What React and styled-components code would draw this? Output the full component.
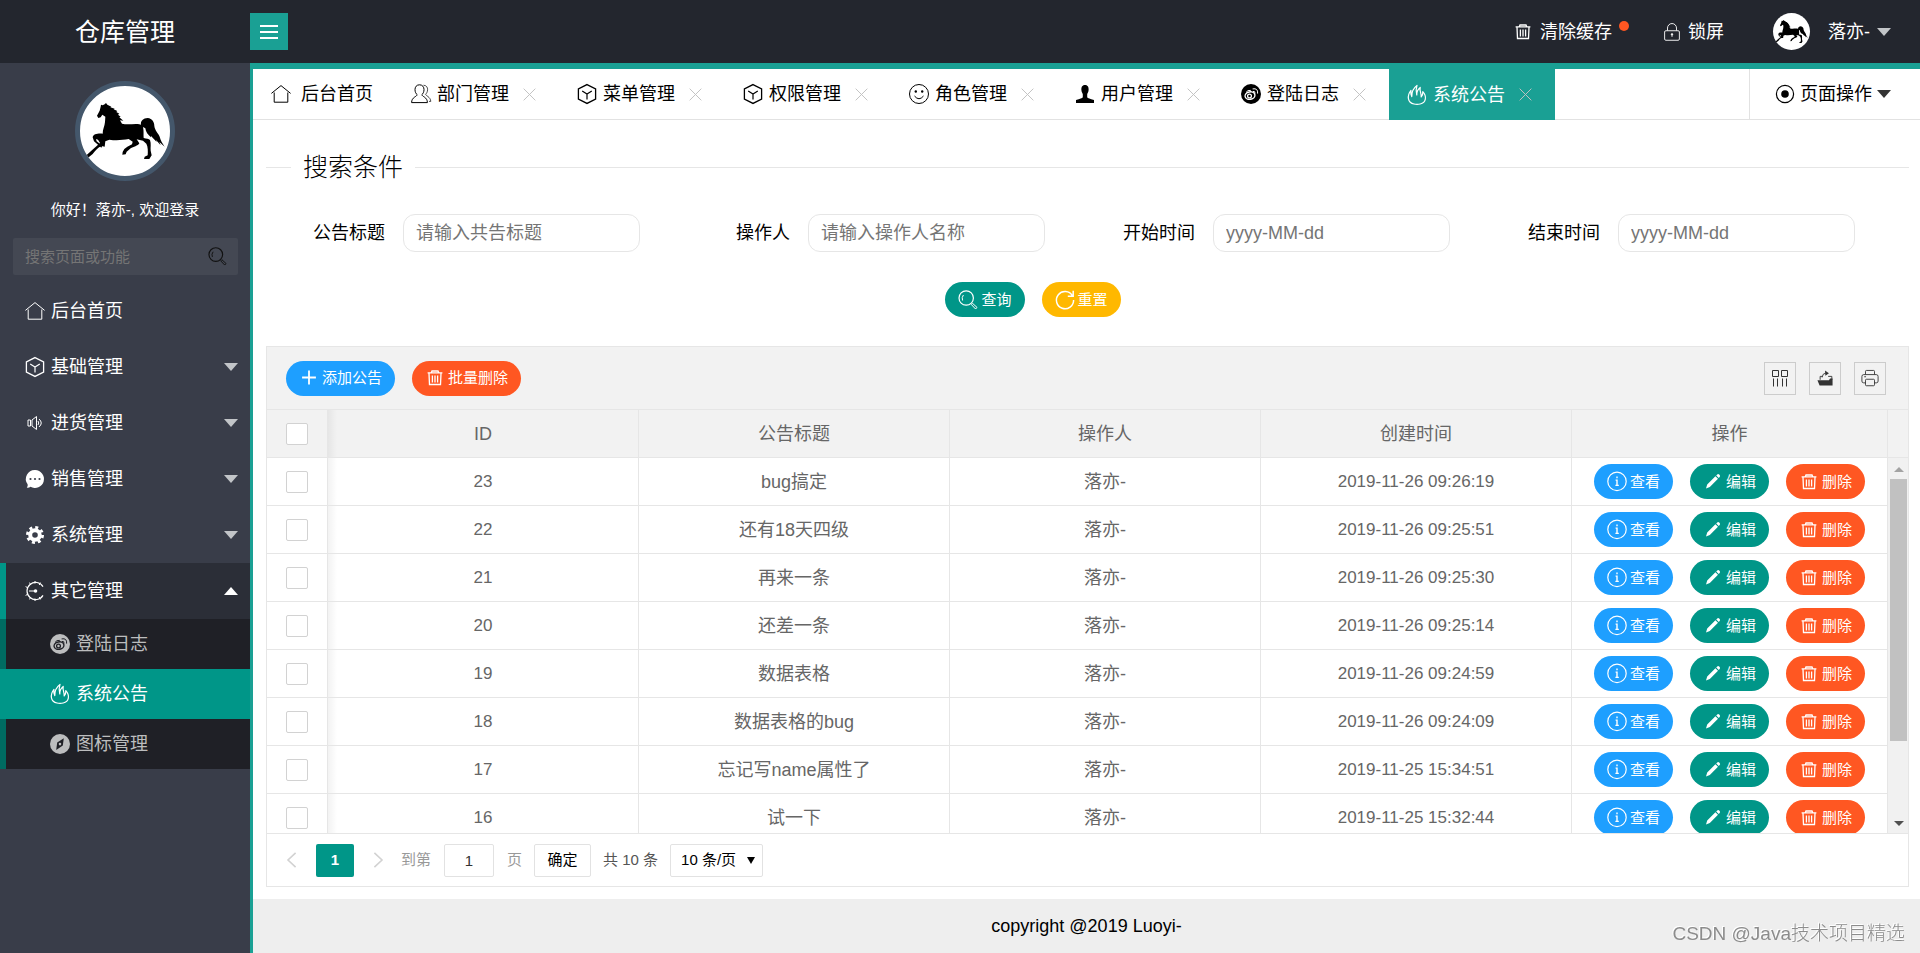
import React, { useState } from 'react';
import styled, { createGlobalStyle, css } from 'styled-components';

const GlobalStyle = createGlobalStyle`
  * {
    box-sizing: border-box;
  }

  body {
    margin: 0;
    background: #fff;
    color: #000;
    font-family: "Liberation Sans", "Noto Sans CJK SC", sans-serif;
    font-size: 18px;
    font-weight: 400;
    line-height: 24px;
  }

  button, input, select {
    font: inherit;
    color: inherit;
  }

  button {
    padding: 0;
    border: 0;
    background: none;
    cursor: pointer;
  }

  a {
    color: inherit;
    text-decoration: none;
  }

  ul {
    margin: 0;
    padding: 0;
    list-style: none;
  }
`;

/* ---------- icons ---------- */

const Svg = styled.svg`
  width: ${({ $size }) => $size || 20}px;
  height: ${({ $size }) => $size || 20}px;
  flex-shrink: 0;
  display: block;
  overflow: visible;
  fill: none;
  stroke: currentColor;
  stroke-width: 1;
`;

const icons = {
  home: (
    <path d="M0.4 9.4 10 1.6 19.6 9.4M3.2 8.5V18.2H16.8V8.5" />
  ),
  cube: (
    <>
      <path strokeWidth="1.3" d="M10 0.6 18.6 5V15L10 19.4 1.4 15V5Z" />
      <path strokeWidth="1.2" d="M5.2 7 10 10 14.8 7M10 10V15.4" />
    </>
  ),
  speaker: (
    <>
      <path d="M3 7H5.5V13H3ZM7 7 11.5 3.5V16.5L7 13Z" />
      <path d="M13 8Q14.5 10 13 12M14 6Q18.5 10 14 14" />
    </>
  ),
  chat: (
    <>
      <path fill="currentColor" stroke="none" d="M10.2 1A9 9 0 1 1 5.5 17.8Q3.8 19 1.8 18.6 3.2 17 2.6 15.3A9 9 0 0 1 10.2 1Z" />
      <g fill="#393d49" stroke="none">
        <circle cx="5.5" cy="10" r="1.1" />
        <circle cx="10" cy="10" r="1.1" />
        <circle cx="14.5" cy="10" r="1.1" />
      </g>
    </>
  ),
  gear: (
    <>
      <circle cx="10" cy="10" r="7.6" stroke="currentColor" strokeWidth="2.8" strokeDasharray="3 2.97" />
      <circle cx="10" cy="10" r="4.8" strokeWidth="4" />
    </>
  ),
  dial: (
    <>
      <path d="M18 5.6A8.6 8.6 0 1 0 18 14.4" strokeWidth="1.2" />
      <path d="M10 0V2.5M10 17.5V20M4.5 1.6 5.8 4M15.5 1.6 14.2 4M0.6 5.6 3.2 7M0.6 14.4 3.2 13M4.5 18.4 5.8 16M15.5 18.4 14.2 16M4 10H12" />
      <circle cx="10.5" cy="10" r="1.8" fill="currentColor" stroke="none" />
    </>
  ),
  weibo: (
    <>
      <circle cx="10" cy="10" r="10" fill="currentColor" stroke="none" />
      <g style={{ color: 'var(--cut)' }}>
        <ellipse cx="9" cy="11.6" rx="5" ry="3.7" transform="rotate(-12 9 11.6)" stroke="currentColor" strokeWidth="1.4" />
        <circle cx="8.5" cy="12" r="1.9" stroke="currentColor" strokeWidth="1.3" />
        <path stroke="currentColor" d="M5 8.5Q6.5 5.8 9.8 6.4M12 7.4Q14.4 7 14 9.6M11.6 4.9Q17.2 3.8 16.6 9.6" />
      </g>
    </>
  ),
  flame: (
    <path
      strokeWidth="1.2"
      strokeLinejoin="round"
      d="M7 19C0.6 17.6 -0.4 11 4 5.4 3.6 8 3.8 10 4.8 11.6 4.6 7.4 6.2 3.2 10 0.4 8.8 3.8 9 7 9.8 10 9.6 7 10.6 4.4 13.2 2.4 12.4 6 14.4 8 14.2 12 15.4 10.4 16 8.6 15.8 6.6 20.2 11.4 19 18 13.2 19 11 19.5 9 19.5 7 19Z"
    />
  ),
  compass: (
    <>
      <circle cx="10" cy="10" r="10" fill="currentColor" stroke="none" />
      <path fill="#1f2026" stroke="none" fillRule="evenodd" d="M13.8 4.2 12.8 11.6 6.2 16 7.2 8.6ZM10 8.8A1.3 1.3 0 1 0 10 11.4 1.3 1.3 0 0 0 10 8.8Z" />
    </>
  ),
  users: (
    <>
      <path d="M8.5 0.8C11.5 0.8 13 3 13 5.6 13 8 12 9.8 10.9 10.6 11 12.8 16.4 13 16.4 18.6H0.6C0.6 13 6 12.8 6.1 10.6 5 9.8 4 8 4 5.6 4 3 5.5 0.8 8.5 0.8Z" />
      <path strokeWidth="0.7" d="M12.5 1.2C15.4 1.4 16.8 3.4 16.6 5.8 16.4 8 15.6 9.4 14.6 10.2 14.8 12 19.4 12.6 19.8 17.4H18" />
    </>
  ),
  smile: (
    <>
      <circle cx="10" cy="10" r="9.5" />
      <path d="M5.5 12Q10 17.5 14.5 12" />
      <circle cx="6.8" cy="7.5" r="1.2" fill="currentColor" stroke="none" />
      <circle cx="13.2" cy="7.5" r="1.2" fill="currentColor" stroke="none" />
    </>
  ),
  user: (
    <path fill="currentColor" stroke="none" d="M10 1C13 1 13.8 3.5 13.6 6 13.4 8.2 12.6 9 12.2 10.2V13.2Q13 14.5 19 16V19H1V16Q7 14.5 7.8 13.2V10.2C7.4 9 6.6 8.2 6.4 6 6.2 3.5 7 1 10 1Z" />
  ),
  target: (
    <>
      <circle cx="10" cy="10" r="8.6" strokeWidth="1.2" />
      <circle cx="10" cy="10" r="3.8" fill="currentColor" stroke="none" />
    </>
  ),
  search: (
    <>
      <circle cx="8.2" cy="8" r="7.2" strokeWidth="1.2" />
      <path d="M4.6 10.5Q3.4 7.5 5.4 5" />
      <path d="M13.4 14.6 14.6 13.4 19 17.4 17.6 19Z" />
    </>
  ),
  refresh: (
    <path strokeWidth="1.5" d="M17.4 5.8A8.6 8.6 0 1 0 18.6 10M18.2 0.8V6.2H12.8" />
  ),
  trash: (
    <path d="M2.6 4.9H17.4M6.4 4.6 7 3H13L13.6 4.6M4 5.4 4.5 16.5H15.5L16 5.4M7.4 7.6V14.4M10 7.6V14.4M12.6 7.6V14.4" strokeWidth="1.3" />
  ),
  lock: (
    <>
      <rect x="1.8" y="8.6" width="16.4" height="10.6" rx="1.4" />
      <path d="M5 8.4V5.6A5 5 0 0 1 15 5.6V8.4M10 12.4V15.4" />
      <circle cx="10" cy="12.6" r="0.8" fill="currentColor" />
    </>
  ),
  plus: (
    <path strokeWidth="1.8" d="M10 2.6V16.4M3.1 9.5H16.9" />
  ),
  info: (
    <>
      <circle cx="10" cy="9.4" r="9.2" strokeWidth="1.2" />
      <path strokeWidth="1.4" d="M10 7.6V13.6M10 4.6V6.2M8.6 8.1H10M8.4 13.4H11.8" />
    </>
  ),
  pencil: (
    <path fill="currentColor" stroke="none" d="M3 16.4 4.2 12.4 12.4 4.2 15 6.8 6.8 15ZM13.2 3.4 14.6 2.2Q15.4 1.8 16.2 2.6L16.8 3.2Q17.4 4 16.8 4.8L15.8 6Z" />
  ),
  columns: (
    <path d="M2.5 2.5H8.5V8.5H2.5ZM11.5 2.5H17.5V8.5H11.5ZM3.5 10.5V18.5M7.5 10.5V18.5M12.5 10.5V18.5M16.5 10.5V18.5" />
  ),
  exporter: (
    <>
      <path fill="currentColor" stroke="none" d="M1.6 12.4H14.4L15.6 10.6H18.4V18.4H4Z" />
      <path d="M4.6 12V8.2H7M13.5 8.2H17.6V12M6.8 9.4Q7 5 11 4.4" />
      <path fill="currentColor" stroke="none" d="M10 1.6 14.4 4.6 10.4 7.6Z" />
    </>
  ),
  printer: (
    <>
      <path d="M5 6V2.6Q5 1.6 6 1.6H14Q15 1.6 15 2.6V6" />
      <path d="M5 15.4H3Q1 15.4 1 13.4V8.4Q1 6.2 3 6.2H17Q19 6.2 19 8.4V13.4Q19 15.4 17 15.4H15" />
      <rect x="5" y="11.4" width="10" height="7.2" rx="1" />
      <path d="M3.6 8.6H5.6" />
    </>
  ),
  left: <path strokeWidth="2" d="M14.5 1 5 10 14.5 19" />,
  right: <path strokeWidth="2" d="M5.5 1 15 10 5.5 19" />,
  close: <path strokeWidth="1.5" d="M1 1 19 19M19 1 1 19" />,
};

function Icon({ name, size }) {
  return (
    <Svg viewBox="0 0 20 20" $size={size} aria-hidden="true">
      {icons[name]}
    </Svg>
  );
}

const HorseSvg = styled.svg`
  display: block;
  width: 100%;
  height: 100%;
`;

function Horse() {
  return (
    <HorseSvg viewBox="30 24 270 270" role="img" aria-label="落亦-">
      <path d="M81 113 89 98 92 86 93 80 98 82 104 79 108 75 112 80 124 86 121 88 134 92 131 94 142 99 139 102 148 107 144 110 152 116 148 118 160 128 150 127 156 137C170 141 184 138 198 138 206 138 210 139 213 140 211 128 220 121 233 120 247 122 253 132 253 144 255 158 264 165 269 176 272 188 277 196 284 206L268 192 272 202 258 186 260 192 243 174 243 178C234 170 227 162 226 151L219 147C222 160 220 170 221 180 230 182 236 182 240 186 244 196 241 210 242 218L245 232 238 243 222 243 224 236 233 232C234 220 234 206 229 197L219 188 200 184 208 196C204 204 190 206 182 211L170 221 167 229 157 230 158 222 163 213 172 206 186 199 188 191 176 183C158 186 140 188 118 185L106 190 104 206 95 204C84 208 76 218 68 228L56 238 48 242 40 250 36 244 64 218 90 195 84 185 78 183 80 190 97 203 94 209 72 190 68 178C70 168 82 166 98 167 98 154 104 144 105 132L106 116 97 110 92 118 85 120Z" />
    </HorseSvg>
  );
}

const Caret = styled.span`
  width: 0;
  height: 0;
  border: 7px solid transparent;
  border-top: 8px solid ${({ $color }) => $color || '#c2c5c8'};
  border-bottom: 0;

  ${({ $up }) => $up && css`
    border-top: 0;
    border-bottom: 8px solid #fff;
  `}
`;

/* ---------- frame ---------- */

const Page = styled.div`
  height: 100vh;
  display: flex;
  flex-direction: column;
`;

const Header = styled.header`
  height: 63px;
  flex-shrink: 0;
  display: flex;
  align-items: center;
  background: #23262e;
  color: #fff;
`;

const Logo = styled.div`
  width: 250px;
  font-size: 25px;
  line-height: 32px;
  text-align: center;
`;

const MenuToggle = styled.button`
  width: 38px;
  height: 37px;
  display: flex;
  flex-direction: column;
  align-items: center;
  justify-content: center;
  gap: 4px;
  background: #1aa094;

  span {
    width: 18px;
    height: 2px;
    background: #fff;
  }
`;

const HeaderNav = styled.nav`
  margin-left: auto;
  padding-right: 29px;
  display: flex;
  align-items: center;
`;

const HeaderLink = styled.a`
  display: flex;
  align-items: center;
  gap: 7px;
  margin-left: ${({ $before }) => $before || 0}px;
`;

const Dot = styled.span`
  width: 10px;
  height: 10px;
  margin-bottom: 12px;
  border-radius: 50%;
  background: #ff5722;
`;

const SmallAvatar = styled.span`
  width: 37px;
  height: 37px;
  margin-right: 11px;
  border-radius: 50%;
  background: #fff;
  overflow: hidden;
`;

const Body = styled.div`
  flex: 1;
  min-height: 0;
  display: flex;
`;

/* ---------- sidebar ---------- */

const Sidebar = styled.aside`
  width: 250px;
  flex-shrink: 0;
  display: flex;
  flex-direction: column;
  background: #393d49;
  color: #fff;
`;

const Avatar = styled.div`
  width: 100px;
  height: 100px;
  margin: 18px auto 0;
  border: 5px solid #44576b;
  border-radius: 50%;
  background: #fff;
  overflow: hidden;
`;

const Greeting = styled.p`
  margin: 17px 0;
  font-size: 15px;
  line-height: 23px;
  text-align: center;
`;

const SideSearch = styled.form`
  height: 37px;
  margin: 0 12px 8px 13px;
  padding: 0 11px 0 12px;
  display: flex;
  align-items: center;
  border-radius: 2px;
  background: #444853;
  color: #111;

  input {
    flex: 1;
    min-width: 0;
    padding: 0;
    border: 0;
    outline: 0;
    background: none;
    color: #fff;
    font-size: 15px;
  }

  input::placeholder {
    color: #757575;
    opacity: 1;
  }
`;

const MenuLink = styled.a`
  height: 56px;
  padding: 0 12px 0 25px;
  display: flex;
  align-items: center;
  gap: 6px;

  ${Caret} {
    margin-left: auto;
  }

  ${({ $open }) => $open && css`
    padding-left: 19px;
    border-left: 6px solid #009688;
    background: #2b2e37;
  `}
`;

const SubLink = styled.a`
  --cut: #1f2026;
  height: 50px;
  padding-left: 44px;
  display: flex;
  align-items: center;
  gap: 6px;
  border-left: 6px solid #006b61;
  background: #1f2026;
  color: #bcbdbe;

  ${({ $active }) => $active && css`
    border-color: #009688;
    background: #009688;
    color: #fff;
  `}
`;

/* ---------- main ---------- */

const Main = styled.main`
  flex: 1;
  min-width: 0;
  display: flex;
  flex-direction: column;
  border-top: 6px solid #1aa094;
  border-left: 3px solid #1aa094;
`;

const TabBar = styled.div`
  height: 51px;
  flex-shrink: 0;
  display: flex;
  border-bottom: 1px solid #e2e2e2;
`;

const TabList = styled.ul`
  flex: 1;
  display: flex;
`;

const Tab = styled.li`
  --cut: #fff;
  width: ${({ $home }) => ($home ? 140 : 166)}px;
  height: ${({ $active }) => ($active ? 51 : 50)}px;
  padding-left: 18px;
  display: flex;
  align-items: center;
  gap: 14px;
  background: ${({ $active }) => ($active ? '#1aa094' : '#fff')};
  color: ${({ $active }) => ($active ? '#fff' : '#000')};

  a {
    display: flex;
    align-items: center;
    gap: ${({ $home }) => ($home ? 10 : 6)}px;
  }

  button {
    color: #c2c2c2;
  }
`;

const PageOps = styled.button`
  width: 171px;
  padding-left: 25px;
  display: flex;
  align-items: center;
  gap: 5px;
  border-left: 1px solid #e2e2e2;
`;

const Content = styled.div`
  flex: 1;
  min-height: 0;
  padding: 31px 11px 12px 13px;
  display: flex;
  flex-direction: column;
`;

const SearchForm = styled.form`
  margin-bottom: 29px;
`;

const Legend = styled.h2`
  margin: 0;
  display: flex;
  align-items: center;
  gap: 12px;
  font-size: 25px;
  font-weight: 300;
  line-height: 32px;

  &::before,
  &::after {
    content: "";
    height: 1px;
    background: #e6e6e6;
  }

  &::before {
    width: 25px;
  }

  &::after {
    flex: 1;
  }
`;

const Fields = styled.div`
  margin: 31px 9px 30px 14px;
  display: grid;
  grid-template-columns: repeat(4, minmax(0, 1fr));
`;

const Field = styled.label`
  padding-right: 45px;
  display: flex;
  align-items: center;
  gap: 18px;

  span {
    width: 105px;
    flex-shrink: 0;
    text-align: right;
  }

  input {
    flex: 1;
    min-width: 0;
    height: 38px;
    padding: 0 12px;
    border: 1px solid #e6e6e6;
    border-radius: 12px;
    background: #fff;
    outline: 0;
  }

  input::placeholder {
    color: #757575;
    opacity: 1;
  }
`;

const Actions = styled.div`
  padding-right: ${({ $shift }) => $shift || 0}px;
  display: flex;
  justify-content: center;
  gap: 17px;
`;

const Pill = styled.button`
  height: 35px;
  padding: 0 13px;
  display: inline-flex;
  align-items: center;
  gap: 3px;
  border-radius: 18px;
  background: ${({ $color }) => $color};
  color: #fff;
  font-size: 15px;
  font-weight: 400;
  line-height: 20px;
  white-space: nowrap;
`;

const Panel = styled.section`
  flex: 1;
  min-height: 0;
  display: flex;
  flex-direction: column;
  border: 1px solid #e6e6e6;
`;

const Toolbar = styled.div`
  height: 63px;
  flex-shrink: 0;
  padding: 0 22px 0 19px;
  display: flex;
  align-items: center;
  gap: 17px;
  border-bottom: 1px solid #e6e6e6;
  background: #f2f2f2;
`;

const Tools = styled.div`
  margin-left: auto;
  display: flex;
  gap: 13px;
`;

const Tool = styled.button`
  width: 32px;
  height: 33px;
  display: flex;
  align-items: center;
  justify-content: center;
  border: 1px solid #ccc;
  color: #333;
`;

const TableRow = styled.div`
  display: flex;
  flex-shrink: 0;
  background: ${({ $head }) => ($head ? '#f2f2f2' : '#fff')};

  ${({ $head }) => !$head && css`
    flex: 1;
    min-height: 0;
  `}
`;

const Viewport = styled.div`
  flex: 1;
  min-width: 0;
  overflow: hidden;
`;

const Table = styled.table`
  width: 100%;
  border-spacing: 0;
  table-layout: fixed;
  color: #666;

  th,
  td {
    height: 48px;
    padding: 0;
    border-right: 1px solid #e6e6e6;
    border-bottom: 1px solid #e6e6e6;
    font-weight: 400;
    text-align: center;
    white-space: nowrap;
  }

  th:nth-child(2),
  td:nth-child(2) {
    background: linear-gradient(to right, rgba(0, 0, 0, 0.05), transparent 9px);
  }
`;

const Num = styled.span`
  font-size: 17px;
`;

const Check = styled.input.attrs({ type: 'checkbox' })`
  appearance: none;
  display: block;
  width: 22px;
  height: 22px;
  margin: 0 auto;
  border: 1px solid #d2d2d2;
  border-radius: 2px;
  background: #fff;

  &:checked {
    border-color: #009688;
    background: #009688;
  }
`;

const HeadGutter = styled.div`
  width: 20px;
  border-bottom: 1px solid #e6e6e6;
`;

const ScrollTrack = styled.div`
  width: 20px;
  padding: 9px 1px 7px 2px;
  display: flex;
  flex-direction: column;
  align-items: center;
  background: #f1f1f1;
`;

const ScrollArrow = styled.span`
  border: 5px solid transparent;
  border-top: ${({ $up }) => ($up ? '0' : '5px solid #505050')};
  border-bottom: ${({ $up }) => ($up ? '5px solid #a3a3a3' : '0')};
`;

const ScrollThumb = styled.div`
  width: 100%;
  height: 73%;
  margin: 7px 0 auto;
  background: #c1c1c1;
`;

const Pager = styled.div`
  height: 53px;
  flex-shrink: 0;
  padding-left: 18px;
  display: flex;
  align-items: center;
  border-top: 1px solid #e6e6e6;
  color: #999;
  font-size: 15px;
  line-height: 20px;

  input,
  select,
  button {
    height: 33px;
  }

  label {
    margin-left: 16px;
    display: flex;
    align-items: center;
    gap: 13px;
  }

  input {
    width: 50px;
    padding: 0;
    border: 1px solid #e2e2e2;
    border-radius: 2px;
    color: #333;
    text-align: center;
  }
`;

const PageArrow = styled.button`
  width: 14px;
  display: flex;
  align-items: center;
  justify-content: center;
  color: #d2d2d2;
`;

const CurrentPage = styled.button`
  width: 38px;
  margin: 0 17px;
  border-radius: 2px;
  background: #009688;
  color: #fff;
  font-weight: 700;
`;

const Confirm = styled.button`
  width: 57px;
  margin: 0 12px;
  border: 1px solid #e2e2e2;
  border-radius: 2px;
  color: #000;
`;

const Total = styled.span`
  margin-right: 12px;
  color: #555;
`;

const PageSize = styled.div`
  position: relative;
  color: #000;

  select {
    appearance: none;
    width: 93px;
    padding: 0 10px;
    border: 1px solid #e2e2e2;
    border-radius: 2px;
    background: #fff;
  }

  &::after {
    content: "";
    position: absolute;
    top: 13px;
    right: 8px;
    border: 4px solid transparent;
    border-top: 7px solid #000;
    border-bottom: 0;
    pointer-events: none;
  }
`;

const Footer = styled.footer`
  height: 54px;
  flex-shrink: 0;
  background: #eee;
  line-height: 55px;
  text-align: center;
`;

const Watermark = styled.div`
  position: fixed;
  right: 15px;
  bottom: 5px;
  color: #8c8c8c;
  font-size: 19px;
  font-weight: 300;
  line-height: 28px;
  text-shadow: -1px -1px 0 #fff;
`;

/* ---------- data ---------- */

const menu = [
  { icon: 'home', text: '后台首页', leaf: true },
  { icon: 'cube', text: '基础管理' },
  { icon: 'speaker', text: '进货管理' },
  { icon: 'chat', text: '销售管理' },
  { icon: 'gear', text: '系统管理' },
  {
    icon: 'dial',
    text: '其它管理',
    children: [
      { icon: 'weibo', text: '登陆日志' },
      { icon: 'flame', text: '系统公告', active: true },
      { icon: 'compass', text: '图标管理' },
    ],
  },
];

const tabs = [
  { icon: 'home', text: '后台首页', home: true },
  { icon: 'users', text: '部门管理' },
  { icon: 'cube', text: '菜单管理' },
  { icon: 'cube', text: '权限管理' },
  { icon: 'smile', text: '角色管理' },
  { icon: 'user', text: '用户管理' },
  { icon: 'weibo', text: '登陆日志' },
  { icon: 'flame', text: '系统公告' },
];

const fields = [
  { name: 'title', label: '公告标题', placeholder: '请输入共告标题' },
  { name: 'operator', label: '操作人', placeholder: '请输入操作人名称' },
  { name: 'startTime', label: '开始时间', placeholder: 'yyyy-MM-dd' },
  { name: 'endTime', label: '结束时间', placeholder: 'yyyy-MM-dd' },
];

const notices = [
  { id: 23, title: 'bug搞定', time: '2019-11-26 09:26:19' },
  { id: 22, title: '还有18天四级', time: '2019-11-26 09:25:51' },
  { id: 21, title: '再来一条', time: '2019-11-26 09:25:30' },
  { id: 20, title: '还差一条', time: '2019-11-26 09:25:14' },
  { id: 19, title: '数据表格', time: '2019-11-26 09:24:59' },
  { id: 18, title: '数据表格的bug', time: '2019-11-26 09:24:09' },
  { id: 17, title: '忘记写name属性了', time: '2019-11-25 15:34:51' },
  { id: 16, title: '试一下', time: '2019-11-25 15:32:44' },
];

const BLUE = '#1e9fff';
const GREEN = '#009688';
const RED = '#ff5722';
const YELLOW = '#ffb800';

function Columns() {
  return (
    <colgroup>
      <col width="61" />
      <col />
      <col />
      <col />
      <col />
      <col width="316" />
    </colgroup>
  );
}

function TopHeader() {
  return (
    <Header>
      <Logo>仓库管理</Logo>
      <MenuToggle aria-label="菜单">
        <span />
        <span />
        <span />
      </MenuToggle>
      <HeaderNav>
        <HeaderLink href="#">
          <Icon name="trash" />
          清除缓存
          <Dot />
        </HeaderLink>
        <HeaderLink href="#" $before={34}>
          <Icon name="lock" size={18} />
          锁屏
        </HeaderLink>
        <HeaderLink href="#" $before={49}>
          <SmallAvatar><Horse /></SmallAvatar>
          落亦-
          <Caret />
        </HeaderLink>
      </HeaderNav>
    </Header>
  );
}

function SideMenu() {
  return (
    <Sidebar>
      <Avatar><Horse /></Avatar>
      <Greeting>你好！落亦-, 欢迎登录</Greeting>
      <SideSearch>
        <input aria-label="搜索页面或功能" placeholder="搜索页面或功能" />
        <button type="button" aria-label="搜索"><Icon name="search" size={19} /></button>
      </SideSearch>
      <nav>
        {menu.map((item) => (
          <React.Fragment key={item.text}>
            <MenuLink href="#" $open={!!item.children}>
              <Icon name={item.icon} />
              {item.text}
              {!item.leaf && <Caret $up={!!item.children} />}
            </MenuLink>
            {item.children?.map((child) => (
              <SubLink key={child.text} href="#" $active={child.active}>
                <Icon name={child.icon} />
                {child.text}
              </SubLink>
            ))}
          </React.Fragment>
        ))}
      </nav>
    </Sidebar>
  );
}

function Tabs() {
  const [active, setActive] = useState('系统公告');

  return (
    <TabBar>
      <TabList>
        {tabs.map((tab) => (
          <Tab key={tab.text} $home={tab.home} $active={tab.text === active}>
            <a href="#" onClick={() => setActive(tab.text)}>
              <Icon name={tab.icon} />
              {tab.text}
            </a>
            {!tab.home && <button aria-label="关闭"><Icon name="close" size={13} /></button>}
          </Tab>
        ))}
      </TabList>
      <PageOps>
        <Icon name="target" />
        页面操作
        <Caret $color="#333" />
      </PageOps>
    </TabBar>
  );
}

function Search() {
  return (
    <SearchForm>
      <Legend>搜索条件</Legend>
      <Fields>
        {fields.map((field) => (
          <Field key={field.name}>
            <span>{field.label}</span>
            <input name={field.name} placeholder={field.placeholder} />
          </Field>
        ))}
      </Fields>
      <Actions $shift={109}>
        <Pill type="button" $color={GREEN}><Icon name="search" />查询</Pill>
        <Pill type="reset" $color={YELLOW}><Icon name="refresh" />重置</Pill>
      </Actions>
    </SearchForm>
  );
}

function NoticeTable() {
  return (
    <Panel>
      <Toolbar>
        <Pill $color={BLUE}><Icon name="plus" />添加公告</Pill>
        <Pill $color={RED}><Icon name="trash" />批量删除</Pill>
        <Tools>
          <Tool aria-label="筛选列"><Icon name="columns" /></Tool>
          <Tool aria-label="导出"><Icon name="exporter" size={18} /></Tool>
          <Tool aria-label="打印"><Icon name="printer" size={18} /></Tool>
        </Tools>
      </Toolbar>
      <TableRow $head>
        <Viewport>
          <Table>
            <Columns />
            <thead>
              <tr>
                <th><Check aria-label="全选" /></th>
                <th>ID</th>
                <th>公告标题</th>
                <th>操作人</th>
                <th>创建时间</th>
                <th>操作</th>
              </tr>
            </thead>
          </Table>
        </Viewport>
        <HeadGutter />
      </TableRow>
      <TableRow>
        <Viewport>
          <Table>
            <Columns />
            <tbody>
              {notices.map((notice) => (
                <tr key={notice.id}>
                  <td><Check aria-label={notice.title} /></td>
                  <td><Num>{notice.id}</Num></td>
                  <td>{notice.title}</td>
                  <td>落亦-</td>
                  <td><Num>{notice.time}</Num></td>
                  <td>
                    <Actions>
                      <Pill $color={BLUE}><Icon name="info" />查看</Pill>
                      <Pill $color={GREEN}><Icon name="pencil" />编辑</Pill>
                      <Pill $color={RED}><Icon name="trash" />删除</Pill>
                    </Actions>
                  </td>
                </tr>
              ))}
            </tbody>
          </Table>
        </Viewport>
        <ScrollTrack>
          <ScrollArrow $up />
          <ScrollThumb />
          <ScrollArrow />
        </ScrollTrack>
      </TableRow>
      <Pager>
        <PageArrow aria-label="上一页"><Icon name="left" size={16} /></PageArrow>
        <CurrentPage>1</CurrentPage>
        <PageArrow aria-label="下一页"><Icon name="right" size={16} /></PageArrow>
        <label>
          <span>到第</span>
          <input defaultValue="1" />
          <span>页</span>
        </label>
        <Confirm>确定</Confirm>
        <Total>共 10 条</Total>
        <PageSize>
          <select aria-label="每页条数" defaultValue="10">
            <option value="10">10 条/页</option>
            <option value="20">20 条/页</option>
          </select>
        </PageSize>
      </Pager>
    </Panel>
  );
}

function App() {
  return (
    <Page>
      <GlobalStyle />
      <TopHeader />
      <Body>
        <SideMenu />
        <Main>
          <Tabs />
          <Content>
            <Search />
            <NoticeTable />
          </Content>
          <Footer>copyright @2019 Luoyi-</Footer>
        </Main>
      </Body>
      <Watermark>CSDN @Java技术项目精选</Watermark>
    </Page>
  );
}

export default App;
